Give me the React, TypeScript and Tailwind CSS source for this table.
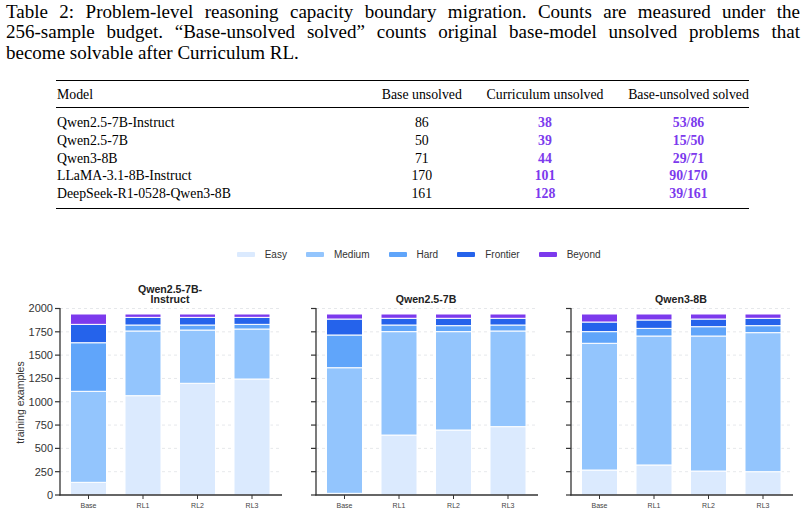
import React from "react";

const COLORS = ["#dbeafe", "#93c5fd", "#60a5fa", "#2563eb", "#7c3aed"];
const LEGEND = ["Easy", "Medium", "Hard", "Frontier", "Beyond"];
const STAGES = ["Base", "RL1", "RL2", "RL3"];

// cumulative tops per bar: easy, medium, hard, frontier, beyond
const CHARTS = [
  {
    title: ["Qwen2.5-7B-", "Instruct"],
    bars: [
      [136, 1112, 1633, 1830, 1941],
      [1065, 1759, 1823, 1905, 1941],
      [1198, 1769, 1823, 1905, 1941],
      [1244, 1780, 1830, 1905, 1941],
    ],
  },
  {
    title: ["Qwen2.5-7B"],
    bars: [
      [18, 1365, 1716, 1887, 1941],
      [643, 1752, 1823, 1895, 1941],
      [697, 1752, 1816, 1895, 1941],
      [733, 1759, 1823, 1895, 1941],
    ],
  },
  {
    title: ["Qwen3-8B"],
    bars: [
      [268, 1627, 1752, 1855, 1941],
      [322, 1705, 1787, 1877, 1941],
      [257, 1705, 1805, 1887, 1941],
      [250, 1741, 1816, 1895, 1941],
    ],
  },
];

const ROWS = [
  ["Qwen2.5-7B-Instruct", "86", "38", "53/86"],
  ["Qwen2.5-7B", "50", "39", "15/50"],
  ["Qwen3-8B", "71", "44", "29/71"],
  ["LLaMA-3.1-8B-Instruct", "170", "101", "90/170"],
  ["DeepSeek-R1-0528-Qwen3-8B", "161", "128", "39/161"],
];

const AX = 60;
const ZERO = 220;
const K = 186.5 / 2000;
const y = (v: number) => ZERO - v * K;

function Chart({ title, bars, yLabel }: { title: string[]; bars: number[][]; yLabel?: boolean }) {
  const ticks = [0, 250, 500, 750, 1000, 1250, 1500, 1750, 2000];
  const font = "'Liberation Sans', Arial, sans-serif";
  return (
    <svg width={255.5} height={240} className="shrink-0 overflow-visible" fontFamily={font}>
      {title.length === 2 ? (
        <>
          <text x={AX + 110} y={17.6} textAnchor="middle" fontSize={10.6} fontWeight="bold" fill="#222">{title[0]}</text>
          <text x={AX + 110} y={28.2} textAnchor="middle" fontSize={10.6} fontWeight="bold" fill="#222">{title[1]}</text>
        </>
      ) : (
        <text x={AX + 110} y={28.2} textAnchor="middle" fontSize={10.6} fontWeight="bold" fill="#222">{title[0]}</text>
      )}

      {ticks.slice(1).map((t) => (
        <line key={t} x1={AX} x2={AX + 221} y1={y(t)} y2={y(t)} stroke="#dfe2e6" strokeWidth={0.8} strokeDasharray="3 3" />
      ))}

      {bars.map((tops, i) => {
        const cx = AX + 28.5 + i * 54.5;
        return (
          <g key={i}>
            {tops.map((top, j) => {
              const prev = j === 0 ? 0 : tops[j - 1];
              return (
                <rect key={j} x={cx - 18} y={y(top)} width={36} height={y(prev) - y(top)} fill={COLORS[j]} stroke="#fff" strokeWidth={1} />
              );
            })}
            <line x1={cx} x2={cx} y1={ZERO} y2={ZERO + 4} stroke="#333" strokeWidth={1} />
            <text x={cx} y={232.5} textAnchor="middle" fontSize={7} fill="#444">{STAGES[i]}</text>
          </g>
        );
      })}

      {ticks.map((t) => (
        <g key={t}>
          <line x1={AX - 5} x2={AX} y1={y(t)} y2={y(t)} stroke="#333" strokeWidth={1.2} />
          {yLabel && (
            <text x={53} y={y(t) + 3.9} textAnchor="end" fontSize={11} fill="#333">{t}</text>
          )}
        </g>
      ))}

      <line x1={AX} x2={AX} y1={y(2000) - 0.5} y2={ZERO + 0.6} stroke="#333" strokeWidth={1.3} />
      <line x1={AX - 0.6} x2={AX + 222} y1={ZERO} y2={ZERO} stroke="#333" strokeWidth={1.3} />

      {yLabel && (
        <text x={20} y={127.5} transform="rotate(-90 20 127.5)" textAnchor="middle" dominantBaseline="central" fontSize={10.5} fill="#333">
          training examples
        </text>
      )}
    </svg>
  );
}

export default function App() {
  return (
    <main className="w-[806px] h-[515px] bg-white text-black overflow-hidden">
      <p className="px-[6px] pt-[1.5px] h-[61.5px] font-['Liberation_Serif',serif] text-[19px] leading-[20.5px]">
        <span className="block [text-align-last:justify]">
          Table 2: Problem-level reasoning capacity boundary migration. Counts are measured under the
        </span>
        <span className="block [text-align-last:justify]">
          256-sample budget. “Base-unsolved solved” counts original base-model unsolved problems that
        </span>
        <span className="block">become solvable after Curriculum RL.</span>
      </p>

      <div className="ml-[56px] mt-[18px] w-[693px] border-y-[1.3px] border-black font-['Liberation_Serif',serif] text-[13.8px]">
        <div className="grid grid-cols-[313.6px_104.4px_142px_133px] h-[27px] pt-[3px] items-center border-b-[0.8px] border-black">
          <div className="pl-[1px]">Model</div>
          <div className="px-[12px] text-center">Base unsolved</div>
          <div className="px-[12px] text-center">Curriculum unsolved</div>
          <div className="pl-[12px] text-center">Base-unsolved solved</div>
        </div>
        <div className="pt-[5.8px] pb-[5.8px]">
          {ROWS.map((r) => (
            <div key={r[0]} className="grid grid-cols-[313.6px_104.4px_142px_133px] h-[17.7px] items-center">
              <div className="pl-[1px]">{r[0]}</div>
              <div className="px-[12px] text-center">{r[1]}</div>
              <div className="px-[12px] text-center font-bold text-[#7c3aed]">{r[2]}</div>
              <div className="pl-[12px] text-center font-bold text-[#7c3aed]">{r[3]}</div>
            </div>
          ))}
        </div>
      </div>

      <div className="h-[66.5px] pt-[41px] pl-[236.7px] flex items-start gap-[19px] font-['Liberation_Sans',Arial,sans-serif] text-[10px] text-[#333]">
        {LEGEND.map((name, i) => (
          <div key={name} className="flex items-center gap-[10px] h-[10px]">
            <span className="block w-[18px] h-[5px] rounded-[1px]" style={{ background: COLORS[i] }} />
            <span>{name}</span>
          </div>
        ))}
      </div>

      <div className="flex">
        {CHARTS.map((c, i) => (
          <Chart key={i} title={c.title} bars={c.bars} yLabel={i === 0} />
        ))}
      </div>
    </main>
  );
}
